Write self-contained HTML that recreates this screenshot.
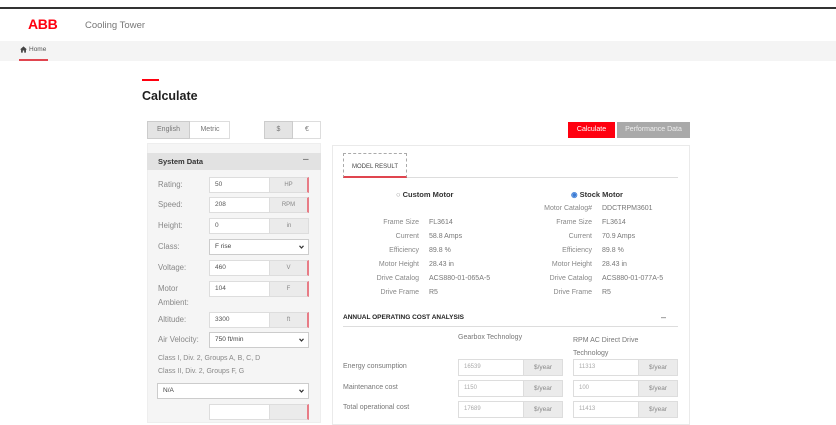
<!DOCTYPE html>
<html><head><meta charset="utf-8"><style>
*{margin:0;padding:0;box-sizing:border-box}
body{width:836px;height:418px;overflow:hidden;background:#fff;font-family:"Liberation Sans",sans-serif;position:relative;color:#666}
.a{position:absolute;white-space:nowrap}
.lbl{font-size:7.8px;color:#888}
.inp{position:absolute;height:16px;background:#fff;border:1px solid #ddd;font-size:6.5px;color:#555;padding-left:5px;line-height:14px}
.unit{position:absolute;top:-1px;right:-1px;height:16px;background:#ebebeb;border:1px solid #ddd;font-size:6px;color:#888;text-align:center;line-height:14px;border-right:2px solid #e87c86}
.sel{position:absolute;height:16px;background:#fff;border:1px solid #ccc;font-size:6.5px;color:#444;padding-left:5px;line-height:14px}
.sel svg{position:absolute;right:4px;top:5px}
.rl{font-size:7px;color:#888;text-align:right;width:90px}
.rv{font-size:7px;color:#777}
.ci{position:absolute;height:17px;background:#fff;border:1px solid #ddd;font-size:6px;color:#aaa;padding-left:5px;line-height:15px}
.cu{position:absolute;top:-1px;right:-1px;width:40px;height:17px;background:#ebebeb;border:1px solid #ddd;font-size:6.5px;color:#888;text-align:center;line-height:15px}
</style></head><body>
<div class="a" style="left:0;top:7px;width:836px;height:2px;background:#333"></div>
<div class="a" style="left:28px;top:16px;font-size:14px;font-weight:900;color:#ff000f;letter-spacing:-0.3px">ABB</div>
<div class="a" style="left:85px;top:20px;font-size:9.5px;color:#777">Cooling Tower</div>
<div class="a" style="left:0;top:41px;width:836px;height:20px;background:#f4f4f4"></div>
<svg class="a" style="left:20px;top:46px" width="7" height="7" viewBox="0 0 10 10"><path d="M5 0.5L0 5h1.5v4.5h2.5v-3h2v3h2.5V5H10z" fill="#444"/></svg>
<div class="a" style="left:29px;top:46px;font-size:6.5px;color:#555">Home</div>
<div class="a" style="left:19px;top:59px;width:29px;height:1.5px;background:#e0454f"></div>
<div class="a" style="left:142px;top:79px;width:17px;height:2px;background:#ff000f"></div>
<div class="a" style="left:142px;top:89px;font-size:12.5px;font-weight:bold;color:#1f1f1f">Calculate</div>

<div class="a" style="left:147px;top:121px;width:83px;height:18px;border:1px solid #ddd;background:#fff"></div>
<div class="a" style="left:147px;top:121px;width:43px;height:18px;background:#e4e4e4;border:1px solid #ccc;font-size:7px;color:#777;text-align:center;line-height:16px">English</div>
<div class="a" style="left:190px;top:121px;width:40px;height:18px;font-size:7px;color:#777;text-align:center;line-height:18px">Metric</div>
<div class="a" style="left:264px;top:121px;width:57px;height:18px;border:1px solid #ddd;background:#fff"></div>
<div class="a" style="left:264px;top:121px;width:29px;height:18px;background:#e4e4e4;border:1px solid #ccc;font-size:7px;color:#777;text-align:center;line-height:16px">$</div>
<div class="a" style="left:293px;top:121px;width:28px;height:18px;font-size:7px;color:#777;text-align:center;line-height:18px">€</div>

<div class="a" style="left:147px;top:143px;width:174px;height:280px;background:#f5f5f5;border:1px solid #eee"></div>
<div class="a" style="left:147px;top:153px;width:174px;height:17px;background:#e2e2e2"></div>
<div class="a" style="left:158px;top:157px;font-size:7.5px;font-weight:bold;color:#333">System Data</div>
<div class="a" style="left:303px;top:154px;font-size:10px;color:#555">–</div>

<div class="a lbl" style="left:158px;top:180px">Rating:</div>
<div class="inp" style="left:209px;top:177px;width:100px">50<div class="unit" style="width:40px">HP</div></div>
<div class="a lbl" style="left:158px;top:200px">Speed:</div>
<div class="inp" style="left:209px;top:197px;width:100px">208<div class="unit" style="width:40px">RPM</div></div>
<div class="a lbl" style="left:158px;top:221px">Height:</div>
<div class="inp" style="left:209px;top:218px;width:100px">0<div class="unit" style="width:40px;border-right:1px solid #ddd">in</div></div>
<div class="a lbl" style="left:158px;top:242px">Class:</div>
<div class="sel" style="left:209px;top:239px;width:100px">F rise<svg width="5" height="4" viewBox="0 0 5 4"><path d="M0.5 0.8L2.5 3L4.5 0.8" stroke="#333" stroke-width="1.2" fill="none"/></svg></div>
<div class="a lbl" style="left:158px;top:263px">Voltage:</div>
<div class="inp" style="left:209px;top:260px;width:100px">460<div class="unit" style="width:40px">V</div></div>
<div class="a lbl" style="left:158px;top:282px;line-height:14px;white-space:normal;width:40px">Motor Ambient:</div>
<div class="inp" style="left:209px;top:281px;width:100px">104<div class="unit" style="width:40px">F</div></div>
<div class="a lbl" style="left:158px;top:315px">Altitude:</div>
<div class="inp" style="left:209px;top:312px;width:100px">3300<div class="unit" style="width:40px">ft</div></div>
<div class="a lbl" style="left:158px;top:335px">Air Velocity:</div>
<div class="sel" style="left:209px;top:332px;width:100px">750 ft/min<svg width="5" height="4" viewBox="0 0 5 4"><path d="M0.5 0.8L2.5 3L4.5 0.8" stroke="#333" stroke-width="1.2" fill="none"/></svg></div>
<div class="a lbl" style="left:158px;top:355px;font-size:7px">Class I, Div. 2, Groups A, B, C, D</div>
<div class="a lbl" style="left:158px;top:368px;font-size:7px">Class II, Div. 2, Groups F, G</div>
<div class="sel" style="left:157px;top:383px;width:152px">N/A<svg width="5" height="4" viewBox="0 0 5 4"><path d="M0.5 0.8L2.5 3L4.5 0.8" stroke="#333" stroke-width="1.2" fill="none"/></svg></div>
<div class="inp" style="left:209px;top:404px;width:100px"><div class="unit" style="width:40px"></div></div>

<div class="a" style="left:568px;top:122px;width:47px;height:16px;background:#ff000f;color:#fff;font-size:7px;text-align:center;line-height:16px">Calculate</div>
<div class="a" style="left:617px;top:122px;width:73px;height:16px;background:#a9a9a9;color:#eee;font-size:7px;text-align:center;line-height:16px">Performance Data</div>

<div class="a" style="left:332px;top:145px;width:358px;height:280px;background:#fff;border:1px solid #eaeaea"></div>
<div class="a" style="left:343px;top:153px;width:64px;height:25px;border:1px dashed #aaa;border-bottom:2px solid #e0454f;font-size:6px;color:#444;text-align:center;line-height:27px">MODEL RESULT</div>
<div class="a" style="left:407px;top:177px;width:271px;height:1px;background:#ddd"></div>

<div class="a" style="left:396px;top:190px;font-size:7.5px;font-weight:bold;color:#333"><span style="font-weight:normal;color:#999">○</span> Custom Motor</div>
<div class="a" style="left:571px;top:190px;font-size:7.5px;font-weight:bold;color:#333"><span style="color:#3a7bd5">◉</span> Stock Motor</div>

<div class="a rl" style="left:502px;top:205px">Motor Catalog#</div><div class="a rv" style="left:602px;top:205px">DDCTRPM3601</div>

<div class="a rl" style="left:329px;top:219px">Frame Size</div><div class="a rv" style="left:429px;top:219px">FL3614</div>
<div class="a rl" style="left:329px;top:233px">Current</div><div class="a rv" style="left:429px;top:233px">58.8 Amps</div>
<div class="a rl" style="left:329px;top:247px">Efficiency</div><div class="a rv" style="left:429px;top:247px">89.8 %</div>
<div class="a rl" style="left:329px;top:261px">Motor Height</div><div class="a rv" style="left:429px;top:261px">28.43 in</div>
<div class="a rl" style="left:329px;top:275px">Drive Catalog</div><div class="a rv" style="left:429px;top:275px">ACS880-01-065A-5</div>
<div class="a rl" style="left:329px;top:289px">Drive Frame</div><div class="a rv" style="left:429px;top:289px">R5</div>

<div class="a rl" style="left:502px;top:219px">Frame Size</div><div class="a rv" style="left:602px;top:219px">FL3614</div>
<div class="a rl" style="left:502px;top:233px">Current</div><div class="a rv" style="left:602px;top:233px">70.9 Amps</div>
<div class="a rl" style="left:502px;top:247px">Efficiency</div><div class="a rv" style="left:602px;top:247px">89.8 %</div>
<div class="a rl" style="left:502px;top:261px">Motor Height</div><div class="a rv" style="left:602px;top:261px">28.43 in</div>
<div class="a rl" style="left:502px;top:275px">Drive Catalog</div><div class="a rv" style="left:602px;top:275px">ACS880-01-077A-5</div>
<div class="a rl" style="left:502px;top:289px">Drive Frame</div><div class="a rv" style="left:602px;top:289px">R5</div>

<div class="a" style="left:343px;top:314px;font-size:6.5px;font-weight:bold;color:#222">ANNUAL OPERATING COST ANALYSIS</div>
<div class="a" style="left:661px;top:312px;font-size:9px;color:#555">–</div>
<div class="a" style="left:343px;top:326px;width:335px;height:1px;background:#ddd"></div>
<div class="a rv" style="left:458px;top:334px">Gearbox Technology</div>
<div class="a rv" style="left:573px;top:334px;line-height:13px">RPM AC Direct Drive<br>Technology</div>

<div class="a rv" style="left:343px;top:363px">Energy consumption</div>
<div class="ci" style="left:458px;top:359px;width:105px">16539<div class="cu">$/year</div></div>
<div class="ci" style="left:573px;top:359px;width:105px">11313<div class="cu">$/year</div></div>
<div class="a rv" style="left:343px;top:384px">Maintenance cost</div>
<div class="ci" style="left:458px;top:380px;width:105px">1150<div class="cu">$/year</div></div>
<div class="ci" style="left:573px;top:380px;width:105px">100<div class="cu">$/year</div></div>
<div class="a rv" style="left:343px;top:404px">Total operational cost</div>
<div class="ci" style="left:458px;top:401px;width:105px">17689<div class="cu">$/year</div></div>
<div class="ci" style="left:573px;top:401px;width:105px">11413<div class="cu">$/year</div></div>
</body></html>
